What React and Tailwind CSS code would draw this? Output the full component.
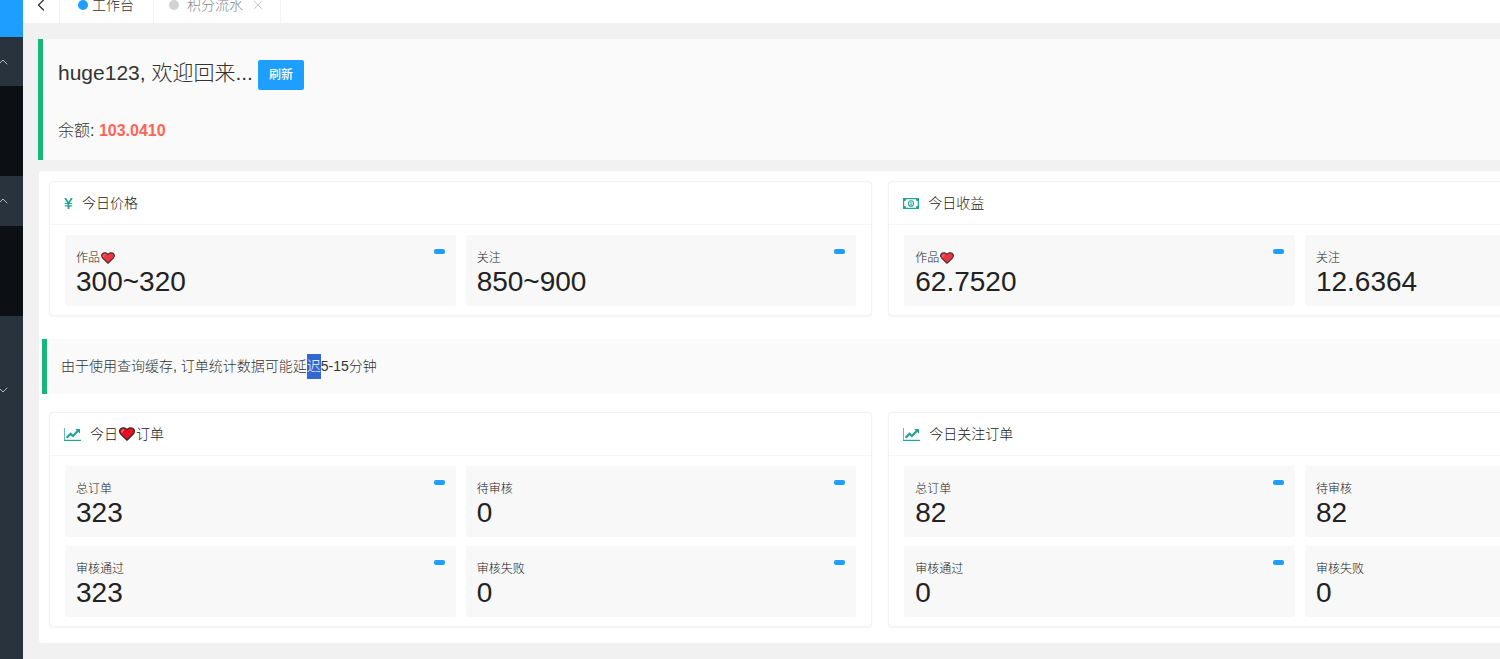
import { ChevronDown, ChevronLeft, ChevronUp, X } from 'lucide-react'
import clsx from 'clsx'

const priceStats = [
  { label: '作品', heart: true, value: '300~320' },
  { label: '关注', value: '850~900' }
]

const incomeStats = [
  { label: '作品', heart: true, value: '62.7520' },
  { label: '关注', value: '12.6364' }
]

const likeOrders = [
  { label: '总订单', value: '323' },
  { label: '待审核', value: '0' },
  { label: '审核通过', value: '323' },
  { label: '审核失败', value: '0' }
]

const followOrders = [
  { label: '总订单', value: '82' },
  { label: '待审核', value: '82' },
  { label: '审核通过', value: '0' },
  { label: '审核失败', value: '0' }
]

function Heart({ className }) {
  return (
    <svg viewBox="0 0 16 14" className={clsx('inline-block shrink-0', className)} aria-hidden="true">
      <path
        d="M8 13.2 1.5 6.8C.2 4.9.6 2.6 2 1.5 3.8.2 6.6.6 8 2.8 9.4.6 12.2.2 14 1.5c1.4 1.1 1.8 3.4.5 5.3Z"
        fill="currentColor"
        stroke="#33272a"
        strokeWidth="1.2"
        strokeLinejoin="round"
      />
      <path d="M3 5.2c-.2-1.2.4-2 1.5-2.3" fill="none" stroke="#ff8a80" strokeWidth="1.1" strokeLinecap="round" />
    </svg>
  )
}

function YenIcon() {
  return (
    <svg viewBox="0 0 9 11" className="h-[11px] w-[9px]" fill="none" stroke="currentColor" aria-hidden="true">
      <path d="M1.1 0 4.5 5.4 7.9 0M4.5 5v6" strokeWidth="1.8" />
      <path d="M.8 5.5h7.4M.8 7.8h7.4" strokeWidth="1.2" />
    </svg>
  )
}

function MoneyIcon() {
  return (
    <svg viewBox="0 0 16 11" className="h-[11px] w-4" fill="none" stroke="currentColor" aria-hidden="true">
      <path d="M.6.6h14.8v9.8H.6Z" strokeWidth="1.2" />
      <path d="M1 1h2.2A2.2 2.2 0 0 1 1 3.2ZM15 1h-2.2A2.2 2.2 0 0 0 15 3.2ZM1 10h2.2A2.2 2.2 0 0 0 1 7.8ZM15 10h-2.2A2.2 2.2 0 0 1 15 7.8Z" fill="currentColor" stroke="none" />
      <ellipse cx="8" cy="5.5" rx="2.5" ry="2.8" strokeWidth="1.1" />
      <path d="M7.1 4.6 8.1 4v2.8M7 6.9h2.2" strokeWidth=".8" />
    </svg>
  )
}

function ChartIcon() {
  return (
    <svg viewBox="0 0 17 13" className="h-[13px] w-[17px]" fill="none" stroke="currentColor" aria-hidden="true">
      <path d="M.5 0v13" strokeWidth="1" strokeOpacity=".7" />
      <path d="M0 12.4h17" strokeWidth="1.2" />
      <path d="m2.6 9.8 4-4 2.3 2.2L13.8 3" strokeWidth="2.2" />
      <path d="M11.2 1H16v4.8Z" fill="currentColor" stroke="none" />
    </svg>
  )
}

function StatTile({ label, heart, value }) {
  return (
    <a href="#" className="block rounded-xs bg-[#f8f8f8] px-[11px] pt-[14px] pb-[9px] text-[#222]">
      <div className="flex items-start justify-between">
        <h3 className="mt-px flex h-4 items-center text-xs leading-4 font-light">
          {label}
          {heart && <Heart className="ml-px h-3 w-[14px] text-[#ee3440]" />}
        </h3>
        <span className="h-[5px] w-[11px] rounded-xs bg-[#1e9fff]" />
      </div>
      <p className="text-[28px] leading-[31px]">{value}</p>
    </a>
  )
}

function Card({ icon, title, stats }) {
  return (
    <section className="rounded-sm border border-[#f3f3f3] bg-white shadow-[0_1px_2px_0_rgba(0,0,0,0.05)]">
      <header className="flex h-[43px] items-center border-b border-[#f6f6f6] px-[14px]">
        <span className="mr-[9px] text-[#23a296]">{icon}</span>
        <h2 className="flex items-center text-sm font-light text-[#222]">{title}</h2>
      </header>
      <div className="grid grid-cols-2 gap-x-[10px] gap-y-[9px] px-[15px] pt-[10px] pb-[9px]">
        {stats.map((item) => (
          <StatTile key={item.label} {...item} />
        ))}
      </div>
    </section>
  )
}

function Sidebar() {
  return (
    <nav className="flex w-[23px] shrink-0 flex-col bg-[#28333e] text-[#b4b8bc]">
      <div className="h-[37px] bg-[#1e9fff]" />
      <button type="button" aria-label="收起" className="flex h-[49px] items-center">
        <ChevronUp className="-ml-[5px] size-4" strokeWidth={1.5} />
      </button>
      <div className="h-[90px] bg-[#0c0f13]" />
      <button type="button" aria-label="收起" className="flex h-[50px] items-center">
        <ChevronUp className="-ml-[5px] size-4" strokeWidth={1.5} />
      </button>
      <div className="h-[90px] bg-[#0c0f13]" />
      <button type="button" aria-label="展开" className="mt-[49px] flex h-[49px] items-center">
        <ChevronDown className="-ml-[5px] size-4" strokeWidth={1.5} />
      </button>
    </nav>
  )
}

function TabBar() {
  return (
    <header className="flex h-[23px] items-end overflow-hidden bg-white text-sm font-light">
      <button type="button" aria-label="后退" className="flex h-9 w-[37px] items-center justify-center border-r border-[#f4f4f4] text-[#333]">
        <ChevronLeft className="size-5" strokeWidth={1.5} />
      </button>
      <a href="#" className="flex h-9 items-center border-r border-[#f4f4f4] pr-[19px] pl-[18px] text-[#333]">
        <span className="mr-1 size-[10px] rounded-full bg-[#1e9fff]" />
        工作台
      </a>
      <div className="flex h-9 items-center border-r border-[#f4f4f4] pr-[15px] pl-[15px] text-[#888]">
        <a href="#" className="flex items-center">
          <span className="mr-2 size-[10px] rounded-full bg-[#d2d2d2]" />
          积分流水
        </a>
        <button type="button" aria-label="关闭" className="ml-2 text-[#bbb]">
          <X className="size-[14px]" strokeWidth={1.5} />
        </button>
      </div>
    </header>
  )
}

export default function App() {
  return (
    <div className="flex min-h-screen overflow-hidden bg-[#f1f1f1] font-['Liberation_Sans','Noto_Sans_CJK_SC',sans-serif] text-[#333]">
      <Sidebar />
      <div className="min-w-0 flex-1 overflow-hidden">
        <TabBar />
        {/* content runs wider than the viewport and is clipped on the right */}
        <main className="w-[115%] py-4 pl-[15px]">
          <section className="border-l-[5px] border-[#16b777] bg-[#fafafa] pt-[21px] pb-[17px] pl-[15px]">
            <div className="flex items-start">
              <h1 className="text-[21px] leading-[26px] font-light">huge123, 欢迎回来...</h1>
              <button type="button" className="ml-[5px] h-[30px] rounded-xs bg-[#1e9fff] px-[11px] text-xs font-medium text-white">
                刷新
              </button>
            </div>
            <p className="mt-[29px] text-base leading-6 font-light">
              余额: <strong className="font-bold text-[#ff6356]">103.0410</strong>
            </p>
          </section>

          <div className="mt-[11px] ml-px rounded-sm bg-white px-[3px] pt-[10px] pb-4">
            <div className="grid grid-cols-2 gap-4 px-[7px]">
              <Card icon={<YenIcon />} title="今日价格" stats={priceStats} />
              <Card icon={<MoneyIcon />} title="今日收益" stats={incomeStats} />
            </div>

            <p className="mt-[23px] mb-[18px] border-l-[5px] border-[#16b777] bg-[#fafafa] py-[15px] pl-[14px] text-sm leading-[25px] font-light">
              由于使用查询缓存, 订单统计数据可能延
              <span className="inline-block bg-[#3367d1] text-white">迟</span>
              5-15分钟
            </p>

            <div className="grid grid-cols-2 gap-4 px-[7px]">
              <Card
                icon={<ChartIcon />}
                title={<>今日<Heart className="mx-px h-[14px] w-4 text-[#e81123]" />订单</>}
                stats={likeOrders}
              />
              <Card icon={<ChartIcon />} title="今日关注订单" stats={followOrders} />
            </div>
          </div>
        </main>
      </div>
    </div>
  )
}
